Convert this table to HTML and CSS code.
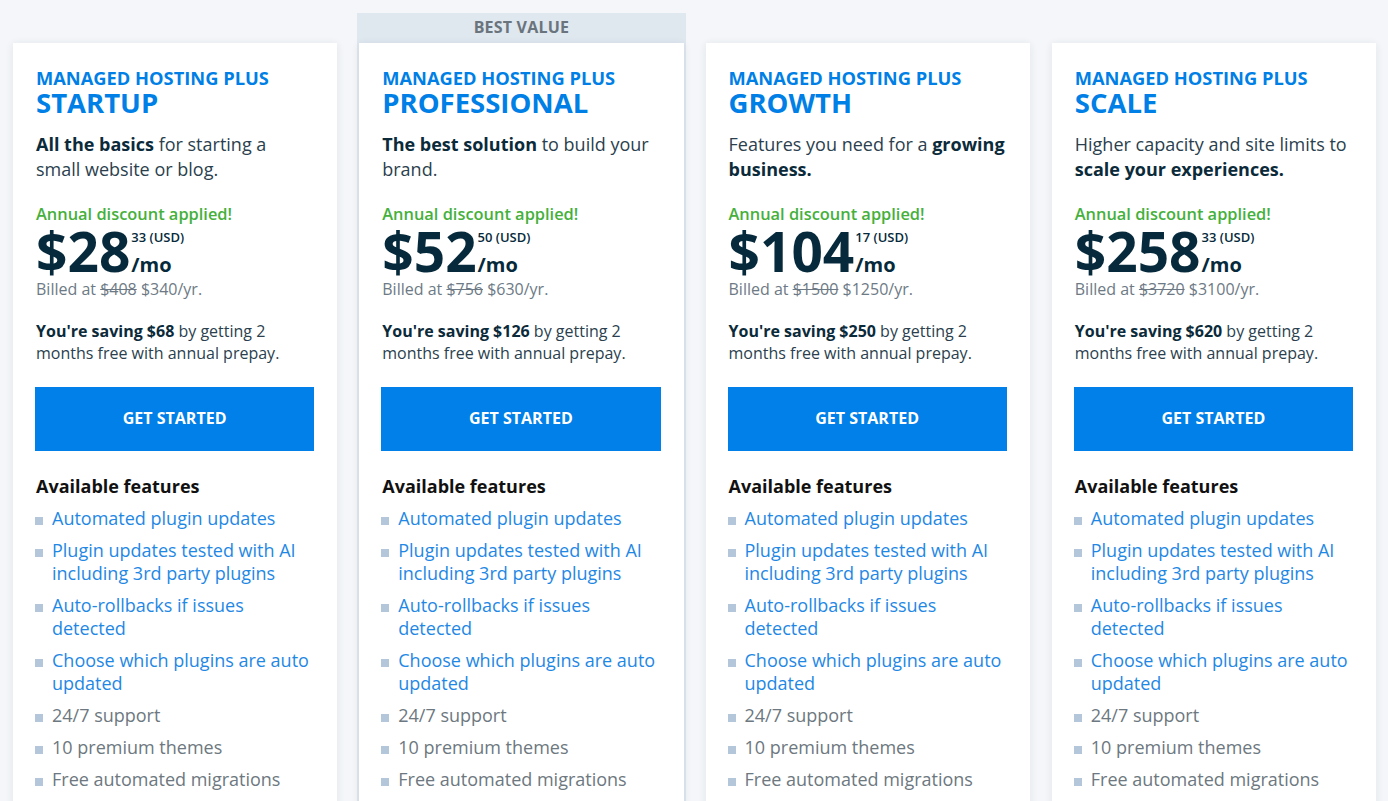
FILE: index.html
```html
<!DOCTYPE html>
<html lang="en">
<head>
    <meta charset="utf-8">
    <title>Managed Hosting Plus Plans</title>
    <link rel="stylesheet" href="styles.css">
</head>
<body>
<div id="plans">

    <div class="plan">
        <div class="plan-card">
            <div class="plan-kicker">MANAGED HOSTING PLUS</div>
            <div class="plan-name">STARTUP</div>
            <p class="plan-desc"><b>All the basics</b> for starting a small website or blog.</p>
            <div class="discount">Annual discount applied!</div>
            <div class="price">
                <span class="amount">$28</span>
                <span class="unit"><span class="cents">33 (USD)</span><span class="per">/mo</span></span>
            </div>
            <div class="billed">Billed at <s>$408</s> $340/yr.</div>
            <p class="saving"><b>You're saving $68</b> by getting 2 months free with annual prepay.</p>
            <a class="btn" href="#">GET STARTED</a>
            <div class="features-title">Available features</div>
            <ul class="features">
                <li class="link">Automated plugin updates</li>
                <li class="link">Plugin updates tested with AI including 3rd party plugins</li>
                <li class="link">Auto-rollbacks if issues detected</li>
                <li class="link">Choose which plugins are auto updated</li>
                <li>24/7 support</li>
                <li>10 premium themes</li>
                <li>Free automated migrations</li>
            </ul>
        </div>
    </div>

    <div class="plan featured">
        <div class="badge">BEST VALUE</div>
        <div class="plan-card">
            <div class="plan-kicker">MANAGED HOSTING PLUS</div>
            <div class="plan-name">PROFESSIONAL</div>
            <p class="plan-desc"><b>The best solution</b> to build your brand.</p>
            <div class="discount">Annual discount applied!</div>
            <div class="price">
                <span class="amount">$52</span>
                <span class="unit"><span class="cents">50 (USD)</span><span class="per">/mo</span></span>
            </div>
            <div class="billed">Billed at <s>$756</s> $630/yr.</div>
            <p class="saving"><b>You're saving $126</b> by getting 2 months free with annual prepay.</p>
            <a class="btn" href="#">GET STARTED</a>
            <div class="features-title">Available features</div>
            <ul class="features">
                <li class="link">Automated plugin updates</li>
                <li class="link">Plugin updates tested with AI including 3rd party plugins</li>
                <li class="link">Auto-rollbacks if issues detected</li>
                <li class="link">Choose which plugins are auto updated</li>
                <li>24/7 support</li>
                <li>10 premium themes</li>
                <li>Free automated migrations</li>
            </ul>
        </div>
    </div>

    <div class="plan">
        <div class="plan-card">
            <div class="plan-kicker">MANAGED HOSTING PLUS</div>
            <div class="plan-name">GROWTH</div>
            <p class="plan-desc">Features you need for a <b>growing business.</b></p>
            <div class="discount">Annual discount applied!</div>
            <div class="price">
                <span class="amount">$104</span>
                <span class="unit"><span class="cents">17 (USD)</span><span class="per">/mo</span></span>
            </div>
            <div class="billed">Billed at <s>$1500</s> $1250/yr.</div>
            <p class="saving"><b>You're saving $250</b> by getting 2 months free with annual prepay.</p>
            <a class="btn" href="#">GET STARTED</a>
            <div class="features-title">Available features</div>
            <ul class="features">
                <li class="link">Automated plugin updates</li>
                <li class="link">Plugin updates tested with AI including 3rd party plugins</li>
                <li class="link">Auto-rollbacks if issues detected</li>
                <li class="link">Choose which plugins are auto updated</li>
                <li>24/7 support</li>
                <li>10 premium themes</li>
                <li>Free automated migrations</li>
            </ul>
        </div>
    </div>

    <div class="plan">
        <div class="plan-card">
            <div class="plan-kicker">MANAGED HOSTING PLUS</div>
            <div class="plan-name">SCALE</div>
            <p class="plan-desc">Higher capacity and site limits to <b>scale your experiences.</b></p>
            <div class="discount">Annual discount applied!</div>
            <div class="price">
                <span class="amount">$258</span>
                <span class="unit"><span class="cents">33 (USD)</span><span class="per">/mo</span></span>
            </div>
            <div class="billed">Billed at <s>$3720</s> $3100/yr.</div>
            <p class="saving"><b>You're saving $620</b> by getting 2 months free with annual prepay.</p>
            <a class="btn" href="#">GET STARTED</a>
            <div class="features-title">Available features</div>
            <ul class="features">
                <li class="link">Automated plugin updates</li>
                <li class="link">Plugin updates tested with AI including 3rd party plugins</li>
                <li class="link">Auto-rollbacks if issues detected</li>
                <li class="link">Choose which plugins are auto updated</li>
                <li>24/7 support</li>
                <li>10 premium themes</li>
                <li>Free automated migrations</li>
            </ul>
        </div>
    </div>

</div>
</body>
</html>
```

FILE: styles.css
```css
html {
    overflow: hidden;
}

body {
    margin: 0;
    padding: 0;
    background: #f4f6f9;
    font-family: "Open Sans", "Liberation Sans", sans-serif;
    color: #0e2b3c;
}

#plans {
    display: grid;
    grid-template-columns: repeat(4, 1fr);
    column-gap: 22px;
    padding: 0 12px 0 13px;
    align-items: start;
}

.plan {
    margin-top: 43px;
}

.plan.featured {
    margin: 13px -2px 0;
    background: #dfe7ef;
    padding: 0 2px;
}

.badge {
    height: 30px;
    line-height: 29px;
    text-align: center;
    font-size: 16px;
    font-weight: 700;
    color: #6a747d;
    letter-spacing: 0.2px;
}

.plan-card {
    background: white;
    padding: 24px 23px 40px 23px;
    box-shadow: 0 1px 8px rgba(30, 50, 80, 0.09);
    height: 900px;
}

.plan-kicker {
    font-size: 18.3px;
    line-height: 22px;
    font-weight: 700;
    color: #007fe6;
}

.plan-name {
    font-size: 27.5px;
    line-height: 28px;
    font-weight: 700;
    color: #007fe6;
}

.plan-desc {
    margin: 15px 0 0 0;
    font-size: 18px;
    line-height: 25px;
    color: #2b3f4e;
}

.plan-desc b, .saving b {
    color: #0b2a3a;
    font-weight: 700;
}

.discount {
    margin-top: 21px;
    font-size: 16.4px;
    line-height: 22px;
    font-weight: 600;
    color: #45b03c;
}

.price {
    display: flex;
    color: #062a3b;
}

.amount {
    font-size: 55px;
    line-height: 55px;
    font-weight: 700;
    margin-top: -2px;
}

.unit {
    display: flex;
    flex-direction: column;
    justify-content: space-between;
    padding: 5px 0 3px 1px;
    font-weight: 700;
}

.cents {
    font-size: 13px;
    line-height: 15px;
    font-weight: 600;
}

.per {
    font-size: 20px;
    line-height: 20px;
}

.billed {
    font-size: 16px;
    line-height: 22px;
    color: #6d7a85;
}

.saving {
    margin: 20px 0 0 0;
    font-size: 16px;
    line-height: 22px;
    color: #2b3f4e;
}

.btn {
    display: block;
    margin: 23px 0 0 -1px;
    height: 64px;
    line-height: 63px;
    text-align: center;
    background: #0080e8;
    color: white;
    font-size: 16px;
    font-weight: 700;
    text-decoration: none;
}

.features-title {
    margin-top: 23px;
    font-size: 18px;
    line-height: 24px;
    font-weight: 700;
    color: #111;
}

.features {
    list-style: none;
    margin: 9px 0 0 -1px;
    padding: 0;
}

.features li {
    position: relative;
    padding-left: 17px;
    margin-bottom: 9px;
    font-size: 18px;
    line-height: 23px;
    color: #6d7880;
}

.features li::before {
    content: "";
    position: absolute;
    left: 0;
    top: 10px;
    width: 8px;
    height: 8px;
    background: #b3c6da;
}

.features li.link {
    color: #1f88e5;
}
```
